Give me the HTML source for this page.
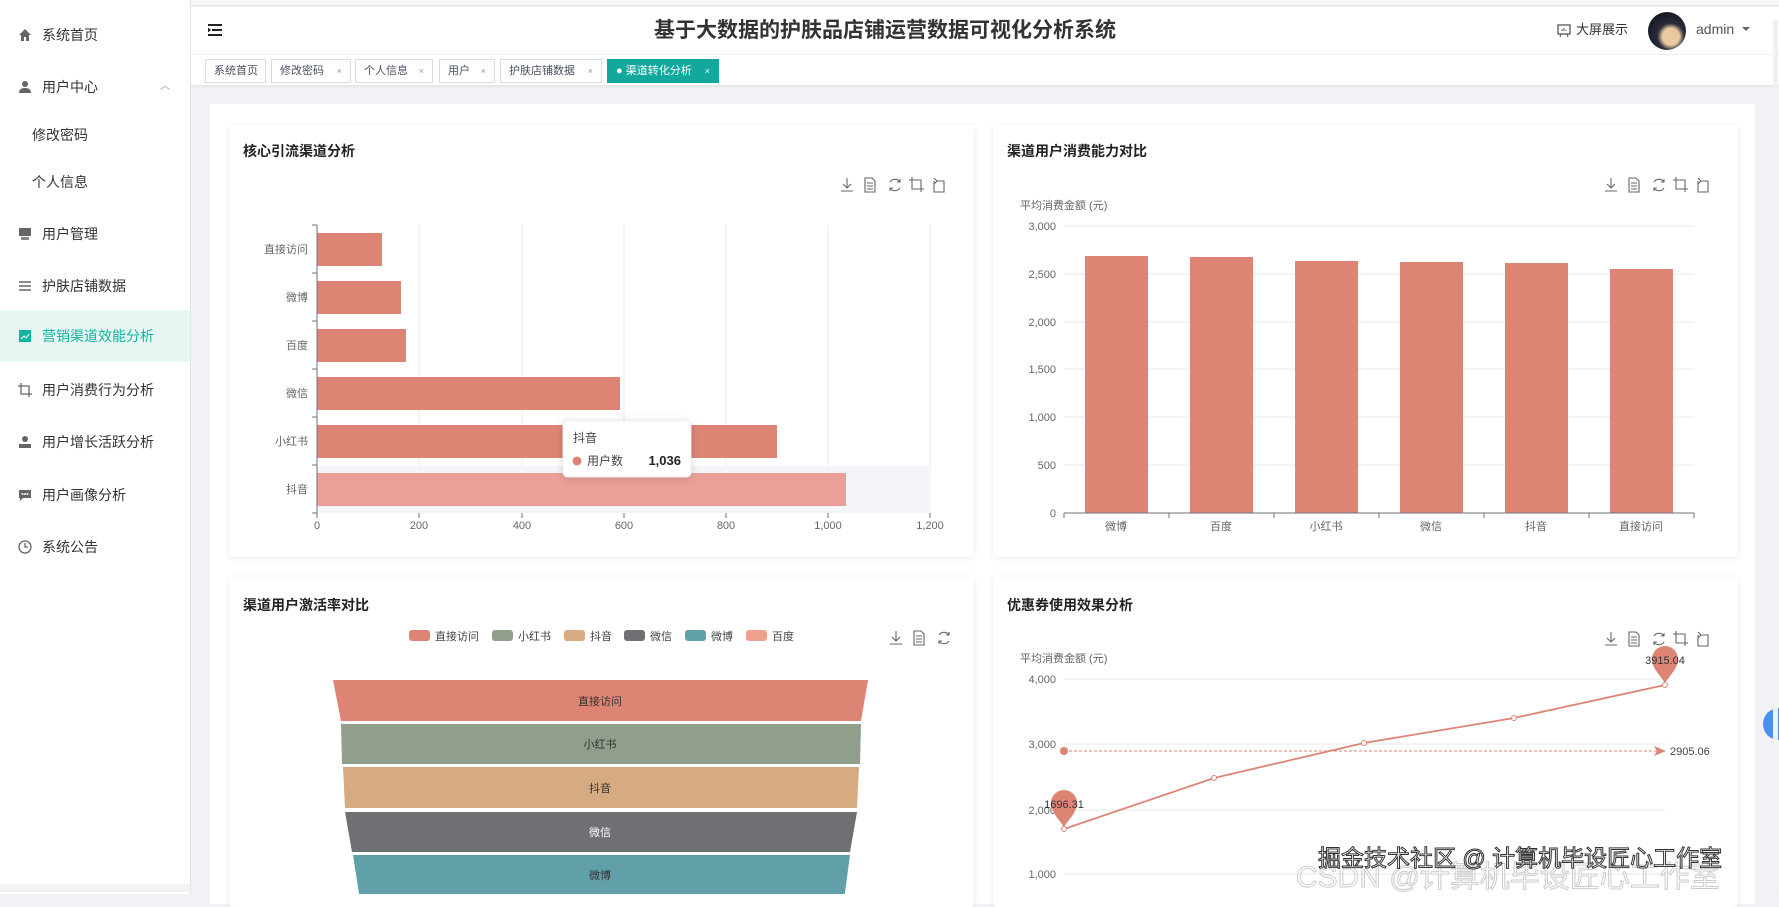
<!DOCTYPE html>
<html><head><meta charset="utf-8">
<style>
*{margin:0;padding:0;box-sizing:border-box}
body{width:1779px;height:894px;overflow:hidden;background:#f1f2f5;font-family:"Liberation Sans","Noto Sans CJK SC",sans-serif;position:relative;color:#333}
.sb{position:absolute;left:0;top:0;width:191px;height:894px;background:#fff;border-right:1px solid #e6e6e6}
.mi{position:absolute;left:0;width:190px;height:52px;line-height:52px;font-size:14px;color:#333}
.mi .ic{position:absolute;left:18px;top:19px;width:14px;height:14px}
.mi span{position:absolute;left:42px}
.hd{position:absolute;left:191px;top:6px;right:0;height:48px;background:#fff;border-top:1px solid #eee}
.tabs{position:absolute;left:191px;top:54px;right:0;height:31px;background:#fff;border-top:1px solid #eee;box-shadow:0 2px 3px rgba(0,0,0,.06)}
.tab{position:absolute;top:4px;height:24px;line-height:22px;border:1px solid #d8dce5;font-size:11px;color:#495060;padding-left:8px;background:#fff}
.tab i{font-style:normal;font-size:9px;color:#999;position:absolute;right:8px}
.panel{position:absolute;left:210px;top:104px;width:1545px;height:800px;background:#fff}
.card{position:absolute;background:#fff;border-radius:4px;box-shadow:0 1px 6px rgba(0,0,0,.09)}
.ct{position:absolute;font-size:14px;font-weight:bold;color:#222}
svg text{font-family:"Liberation Sans","Noto Sans CJK SC",sans-serif}
</style></head><body>
<div style="position:absolute;left:0;top:0;width:1779px;height:6px;background:#f6f6f6;border-bottom:1px solid #e9e9e9"></div>
<div class="sb">
 <div class="mi" style="top:9px"><svg class="ic" viewBox="0 0 14 14"><path d="M7 1L1 7h2v6h3V9h2v4h3V7h2z" fill="#666"/></svg><span>系统首页</span></div>
 <div class="mi" style="top:61px"><svg class="ic" viewBox="0 0 14 14"><circle cx="7" cy="4" r="3" fill="#666"/><path d="M1 13c0-4 3-5 6-5s6 1 6 5z" fill="#666"/></svg><span>用户中心</span><span style="left:160px;font-size:10px;color:#999">︿</span></div>
 <div class="mi" style="top:109px"><span style="left:32px">修改密码</span></div>
 <div class="mi" style="top:156px"><span style="left:32px">个人信息</span></div>
 <div class="mi" style="top:208px"><svg class="ic" viewBox="0 0 14 14"><rect x="1" y="1" width="12" height="8" fill="#666"/><rect x="3" y="10" width="8" height="3" fill="#888"/></svg><span>用户管理</span></div>
 <div class="mi" style="top:260px"><svg class="ic" viewBox="0 0 14 14"><path d="M1 3h12M1 7h12M1 11h12" stroke="#666" stroke-width="1.5"/></svg><span>护肤店铺数据</span></div>
 <div class="mi" style="top:310px;background:#e7f6f3;color:#13b5a1"><svg class="ic" viewBox="0 0 14 14"><rect x="1" y="1" width="12" height="12" fill="#13b5a1"/><path d="M3 10l3-3 2 2 3-4" stroke="#fff" fill="none"/></svg><span>营销渠道效能分析</span></div>
 <div class="mi" style="top:364px"><svg class="ic" viewBox="0 0 14 14"><path d="M3 0v11h11M0 3h11v11" stroke="#666" fill="none" stroke-width="1.3"/></svg><span>用户消费行为分析</span></div>
 <div class="mi" style="top:416px"><svg class="ic" viewBox="0 0 14 14"><circle cx="7" cy="4" r="3" fill="#666"/><rect x="1" y="9" width="12" height="4" fill="#666"/></svg><span>用户增长活跃分析</span></div>
 <div class="mi" style="top:469px"><svg class="ic" viewBox="0 0 14 14"><path d="M1 2h12v8H5l-3 3v-3H1z" fill="#666"/><circle cx="4.5" cy="6" r="1" fill="#fff"/><circle cx="7" cy="6" r="1" fill="#fff"/><circle cx="9.5" cy="6" r="1" fill="#fff"/></svg><span>用户画像分析</span></div>
 <div class="mi" style="top:521px"><svg class="ic" viewBox="0 0 14 14"><circle cx="7" cy="7" r="6" stroke="#666" fill="none" stroke-width="1.3"/><path d="M7 3v4h3" stroke="#666" fill="none" stroke-width="1.3"/></svg><span>系统公告</span></div>
 <div style="position:absolute;left:0;top:884px;width:190px;height:8px;background:#f3f3f3"></div>
</div>
<div class="hd">
 <svg style="position:absolute;left:17px;top:17px" width="14" height="12" viewBox="0 0 14 12"><path d="M0 1h14M4 6h10M0 11h14" stroke="#222" stroke-width="2"/><path d="M0 3.5l3 2.5-3 2.5z" fill="#222"/></svg>
 <div style="position:absolute;left:0;right:0;top:0;text-align:center;line-height:48px;font-size:21px;font-weight:bold;color:#333;margin-left:-200px">基于大数据的护肤品店铺运营数据可视化分析系统</div>
 <svg style="position:absolute;left:1366px;top:17px" width="14" height="14" viewBox="0 0 14 14"><rect x="1" y="1" width="12" height="9" fill="none" stroke="#555" stroke-width="1.3"/><path d="M4 10l-1 3M10 10l1 3M5 7v-2M7 7v-3M9 7v-1" stroke="#555"/></svg>
 <div style="position:absolute;left:1385px;top:0;line-height:46px;font-size:13px;color:#333">大屏展示</div>
 <div style="position:absolute;left:1457px;top:5px;width:38px;height:38px;border-radius:50%;background:radial-gradient(circle at 60% 65%,#e8c9a0 0 25%,#2a2c3a 40%,#151722 75%)"></div>
 <div style="position:absolute;left:1505px;top:0;line-height:44px;font-size:14px;color:#555">admin</div>
 <div style="position:absolute;left:1551px;top:20px;border:4px solid transparent;border-top:4px solid #666"></div>
</div>
<div class="tabs">
 <div class="tab" style="left:14px;width:61px">系统首页</div>
 <div class="tab" style="left:80px;width:80px">修改密码<i>×</i></div>
 <div class="tab" style="left:164px;width:78px">个人信息<i>×</i></div>
 <div class="tab" style="left:248px;width:56px">用户<i>×</i></div>
 <div class="tab" style="left:309px;width:102px">护肤店铺数据<i>×</i></div>
 <div class="tab" style="left:416px;width:112px;background:#13a89e;border-color:#13a89e;color:#fff">● 渠道转化分析<i style="color:#fff">×</i></div>
</div>
<div class="panel"></div>
<div class="card" style="left:229px;top:125px;width:745px;height:432px"></div>
<div class="card" style="left:993px;top:125px;width:745px;height:432px"></div>
<div class="card" style="left:229px;top:577px;width:745px;height:330px"></div>
<div class="card" style="left:993px;top:577px;width:745px;height:330px"></div>
<div class="ct" style="left:243px;top:141px">核心引流渠道分析</div>
<div class="ct" style="left:1007px;top:141px">渠道用户消费能力对比</div>
<div class="ct" style="left:243px;top:595px">渠道用户激活率对比</div>
<div class="ct" style="left:1007px;top:595px">优惠券使用效果分析</div>
<svg style="position:absolute;left:0;top:0" width="1779" height="894">
<defs>
<g id="tb3" stroke="#666" fill="none" stroke-width="1.1">
 <path d="M6 1v10M2 7l4 4 4-4M0 14h12"/>
 <path d="M24 1h7l3 3v11h-10zM26 6h6M26 9h6M26 12h6"/>
 <path d="M49 5a6 6 0 0 1 10 0M59 2v3h-3M59 11a6 6 0 0 1-10 0M49 14v-3h3"/>
</g>
<g id="tb">
 <use href="#tb3"/>
 <g stroke="#666" fill="none" stroke-width="1.1"><path d="M71 0v12h12M68 3h12v12"/>
 <path d="M95 4h8v11h-10v-11M93 1l3 3-3 3"/></g>
</g>
</defs>
<!-- card1 -->
<use href="#tb" x="841" y="177"/>
<g stroke="#e8e8e8"><path d="M419 225v288M522 225v288M624 225v288M726 225v288M828 225v288M930 225v288"/></g>
<rect x="317" y="466" width="613" height="47" fill="#f3f5f9"/>
<g fill="#dd8475">
<rect x="317" y="233" width="65" height="33"/><rect x="317" y="281" width="84" height="33"/><rect x="317" y="329" width="89" height="33"/><rect x="317" y="377" width="303" height="33"/><rect x="317" y="425" width="460" height="33"/></g>
<rect x="317" y="473" width="529" height="33" fill="#eaa098"/>
<path d="M317 225v288M312 225h5M312 273h5M312 321h5M312 369h5M312 417h5M312 465h5M312 513h5M317 513v5M419 513v5M522 513v5M624 513v5M726 513v5M828 513v5M930 513v5" stroke="#6e7079"/>
<g font-size="11" fill="#666" text-anchor="end"><text x="308" y="253">直接访问</text><text x="308" y="301">微博</text><text x="308" y="349">百度</text><text x="308" y="397">微信</text><text x="308" y="445">小红书</text><text x="308" y="493">抖音</text></g>
<g font-size="11" fill="#666" text-anchor="middle"><text x="317" y="529">0</text><text x="419" y="529">200</text><text x="522" y="529">400</text><text x="624" y="529">600</text><text x="726" y="529">800</text><text x="828" y="529">1,000</text><text x="930" y="529">1,200</text></g>
<rect x="563" y="421" width="128" height="56" rx="4" fill="#fff" stroke="#eee" style="filter:drop-shadow(0 1px 4px rgba(0,0,0,.15))"/>
<text x="573" y="442" font-size="12" fill="#444">抖音</text><circle cx="577" cy="461" r="4.5" fill="#dd8475"/><text x="587" y="465" font-size="12" fill="#444">用户数</text><text x="681" y="465" font-size="13" font-weight="bold" fill="#222" text-anchor="end">1,036</text>
<!-- card2 -->
<use href="#tb" x="1605" y="177"/>
<text x="1020" y="209" font-size="11" fill="#666">平均消费金额 (元)</text>
<g stroke="#e8e8e8"><path d="M1064 226h630M1064 274h630M1064 322h630M1064 369h630M1064 417h630M1064 465h630"/></g>
<g font-size="11" fill="#666" text-anchor="end"><text x="1056" y="230">3,000</text><text x="1056" y="278">2,500</text><text x="1056" y="326">2,000</text><text x="1056" y="373">1,500</text><text x="1056" y="421">1,000</text><text x="1056" y="469">500</text><text x="1056" y="517">0</text></g>
<g fill="#dd8475"><rect x="1085" y="256" width="63" height="257"/><rect x="1190" y="257" width="63" height="256"/><rect x="1295" y="261" width="63" height="252"/><rect x="1400" y="262" width="63" height="251"/><rect x="1505" y="263" width="63" height="250"/><rect x="1610" y="269" width="63" height="244"/></g>
<path d="M1064 513h630M1064 513v5M1169 513v5M1274 513v5M1379 513v5M1484 513v5M1589 513v5M1694 513v5" stroke="#6e7079"/>
<g font-size="11" fill="#666" text-anchor="middle"><text x="1116" y="530">微博</text><text x="1221" y="530">百度</text><text x="1326" y="530">小红书</text><text x="1431" y="530">微信</text><text x="1536" y="530">抖音</text><text x="1641" y="530">直接访问</text></g>
<!-- card3 -->
<use href="#tb3" x="890" y="630"/>
<g font-size="11" fill="#444">
<rect x="409" y="630" width="21" height="11" rx="3" fill="#dd8475"/><text x="435" y="640">直接访问</text>
<rect x="492" y="630" width="21" height="11" rx="3" fill="#919e8b"/><text x="518" y="640">小红书</text>
<rect x="564" y="630" width="21" height="11" rx="3" fill="#d7ab82"/><text x="590" y="640">抖音</text>
<rect x="624" y="630" width="21" height="11" rx="3" fill="#6e7074"/><text x="650" y="640">微信</text>
<rect x="685" y="630" width="21" height="11" rx="3" fill="#61a0a8"/><text x="711" y="640">微博</text>
<rect x="746" y="630" width="21" height="11" rx="3" fill="#efa18d"/><text x="772" y="640">百度</text></g>
<path d="M333 680h535l-7 41H341z" fill="#dd8475"/>
<path d="M341 724h520l-1 40H342z" fill="#919e8b"/>
<path d="M343 767h516l-2 41H345z" fill="#d7ab82"/>
<path d="M345 812h512l-7 40H352z" fill="#6e7074"/>
<path d="M353 855h497l-6 45H360z" fill="#61a0a8"/>
<g font-size="11" text-anchor="middle"><text x="600" y="705" fill="#333">直接访问</text><text x="600" y="748" fill="#333">小红书</text><text x="600" y="792" fill="#333">抖音</text><text x="600" y="836" fill="#fff">微信</text><text x="600" y="879" fill="#333">微博</text></g>
<!-- card4 -->
<use href="#tb" x="1605" y="631"/>
<text x="1020" y="662" font-size="11" fill="#666">平均消费金额 (元)</text>
<g stroke="#e8e8e8"><path d="M1064 679h601M1064 744h601M1064 810h601M1064 874h601"/></g>
<g font-size="11" fill="#666" text-anchor="end"><text x="1056" y="683">4,000</text><text x="1056" y="748">3,000</text><text x="1056" y="814">2,000</text><text x="1056" y="878">1,000</text></g>
<path d="M1064 751H1657" stroke="#dd8475" stroke-dasharray="3,2"/><circle cx="1064" cy="751" r="4" fill="#dd8475"/><path d="M1654 746l12 5-12 5 3-5z" fill="#dd8475"/>
<text x="1670" y="755" font-size="11" fill="#444">2905.06</text>
<polyline points="1064,829 1214,778 1364,743 1514,718 1665,685" fill="none" stroke="#dd8475" stroke-width="1.8"/>
<g fill="#fff" stroke="#dd8475"><circle cx="1064" cy="829" r="2.5"/><circle cx="1214" cy="778" r="2.5"/><circle cx="1364" cy="743" r="2.5"/><circle cx="1514" cy="718" r="2.5"/><circle cx="1665" cy="685" r="2.5"/></g>
<path d="M1665 683c-6-9-13-15-13-24a13 13 0 0 1 26 0c0 9-7 15-13 24z" fill="#dd8475"/>
<path d="M1064 827c-6-9-13-15-13-24a13 13 0 0 1 26 0c0 9-7 15-13 24z" fill="#dd8475"/>
<text x="1665" y="664" font-size="11" fill="#333" text-anchor="middle">3915.04</text>
<text x="1064" y="808" font-size="11" fill="#333" text-anchor="middle">1696.31</text>
<text x="1296" y="887" font-size="30" fill="none" stroke="#ccc" stroke-width="1">CSDN @计算机毕设匠心工作室</text>
<text x="1318" y="866" font-size="23" fill="#fff" stroke="#333" stroke-width="1">掘金技术社区 @ 计算机毕设匠心工作室</text>
<path d="M1779 708a16 16 0 0 0 0 32z" fill="#4a90f0"/>
<rect x="1773" y="20" width="5" height="874" fill="#f1f1f1"/>
</svg>
</body></html>
